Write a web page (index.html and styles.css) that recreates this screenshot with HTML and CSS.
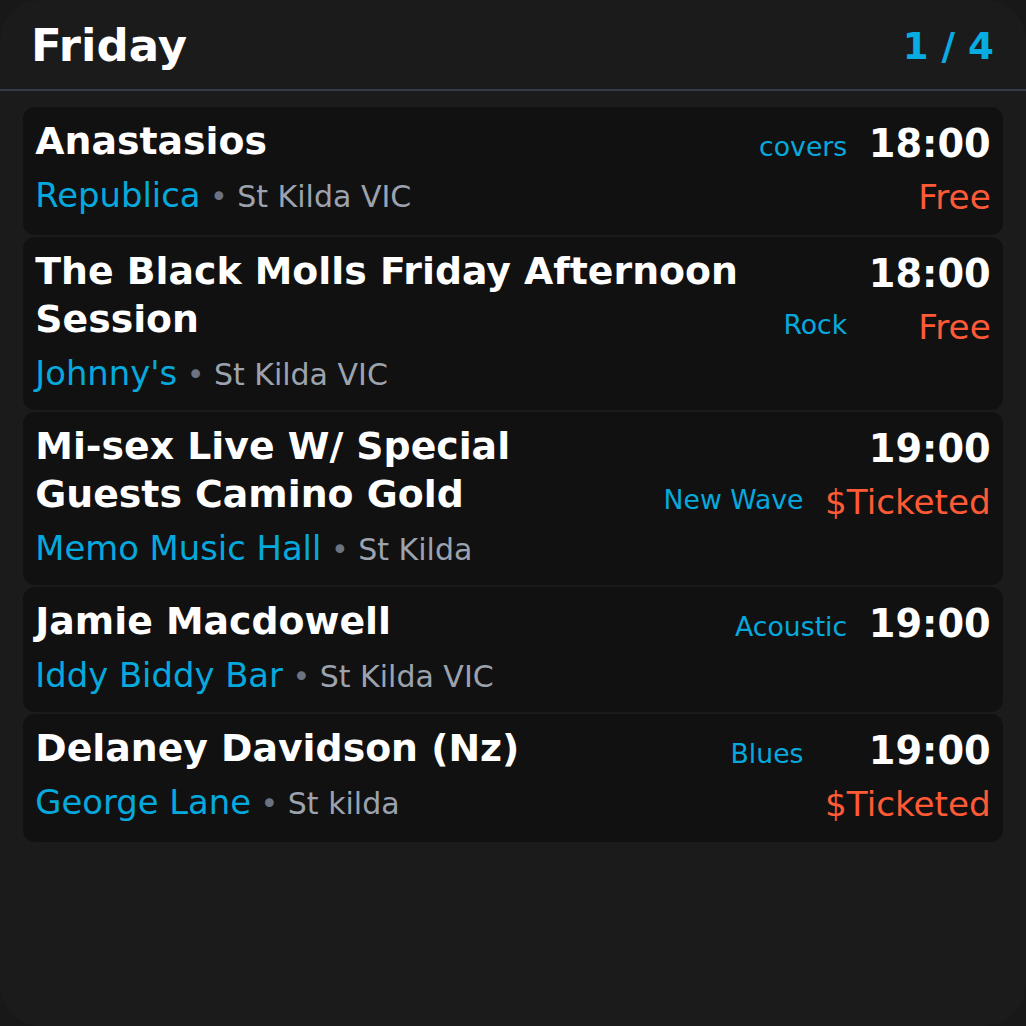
FILE: index.html
```html
<!DOCTYPE html>
<html lang="en">
<head>
<meta charset="utf-8">
<title>Friday gigs</title>
<link rel="stylesheet" href="styles.css">
</head>
<body>
<div class="widget">
  <header class="head">
    <h1 class="day">Friday</h1>
    <span class="count">1 / 4</span>
  </header>
  <div class="list">
    <div class="card">
      <div class="main">
        <div class="top"><div class="title">Anastasios</div><div class="genre">covers</div></div>
        <div class="venue"><span class="vname">Republica</span><span class="loc"> <span class="dot">•</span> St Kilda VIC</span></div>
      </div>
      <div class="side"><div class="time">18:00</div><div class="price">Free</div></div>
    </div>
    <div class="card">
      <div class="main">
        <div class="top"><div class="title">The Black Molls Friday Afternoon Session</div><div class="genre">Rock</div></div>
        <div class="venue"><span class="vname">Johnny's</span><span class="loc"> <span class="dot">•</span> St Kilda VIC</span></div>
      </div>
      <div class="side"><div class="time">18:00</div><div class="price">Free</div></div>
    </div>
    <div class="card">
      <div class="main">
        <div class="top"><div class="title">Mi-sex Live W/ Special Guests Camino Gold</div><div class="genre">New Wave</div></div>
        <div class="venue"><span class="vname">Memo Music Hall</span><span class="loc"> <span class="dot">•</span> St Kilda</span></div>
      </div>
      <div class="side"><div class="time">19:00</div><div class="price">$Ticketed</div></div>
    </div>
    <div class="card">
      <div class="main">
        <div class="top"><div class="title">Jamie Macdowell</div><div class="genre">Acoustic</div></div>
        <div class="venue"><span class="vname">Iddy Biddy Bar</span><span class="loc"> <span class="dot">•</span> St Kilda VIC</span></div>
      </div>
      <div class="side"><div class="time">19:00</div></div>
    </div>
    <div class="card">
      <div class="main">
        <div class="top"><div class="title">Delaney Davidson (Nz)</div><div class="genre">Blues</div></div>
        <div class="venue"><span class="vname">George Lane</span><span class="loc"> <span class="dot">•</span> St kilda</span></div>
      </div>
      <div class="side"><div class="time">19:00</div><div class="price">$Ticketed</div></div>
    </div>
  </div>
</div>
</body>
</html>
```

FILE: styles.css
```css
html {
  background: #181818;
}
body {
  margin: 0;
  font-family: "DejaVu Sans", "Noto Sans", sans-serif;
}
.widget {
  width: 1026px;
  height: 1026px;
  background: #1b1b1b;
  border-radius: 41px;
  overflow: hidden;
  box-sizing: border-box;
}
.head {
  display: flex;
  align-items: center;
  justify-content: space-between;
  padding: 19px 32px 17px 31px;
  border-bottom: 2px solid #363c47;
}
.day {
  margin: 0;
  font-size: 45px;
  font-weight: bold;
  line-height: normal;
  color: #ffffff;
}
.count {
  font-size: 37.2px;
  font-weight: bold;
  color: #07ade2;
}
.list {
  display: flex;
  flex-direction: column;
  gap: 2px;
  padding: 16px 23px 0;
}
.card {
  display: flex;
  gap: 21.6px;
  background: #111111;
  border-radius: 12px;
  padding: 10px 12.3px 15px;
}
.main {
  flex: 1;
  min-width: 0;
}
.top {
  display: flex;
  align-items: flex-end;
  gap: 21.6px;
}
.title {
  flex: 1;
  font-size: 37.8px;
  font-weight: bold;
  line-height: 48px;
  color: #ffffff;
}
.genre {
  font-size: 26.7px;
  line-height: 36px;
  color: #05a9de;
  white-space: nowrap;
}
.venue {
  margin-top: 10px;
  font-size: 33.8px;
  line-height: 42px;
  height: 42px;
  color: #05a9de;
  white-space: nowrap;
}
.loc {
  font-size: 30px;
  line-height: 30px;
  color: #9ca3af;
}
.dot {
  color: #6b7280;
}
.side {
  display: flex;
  flex-direction: column;
  align-items: flex-end;
  padding: 2px 0;
}
.time {
  font-size: 38.3px;
  font-weight: bold;
  line-height: 49.6px;
  color: #ffffff;
}
.price {
  margin-top: 8.4px;
  font-size: 34.2px;
  line-height: 41px;
  color: #ff5a36;
  white-space: nowrap;
}
```
